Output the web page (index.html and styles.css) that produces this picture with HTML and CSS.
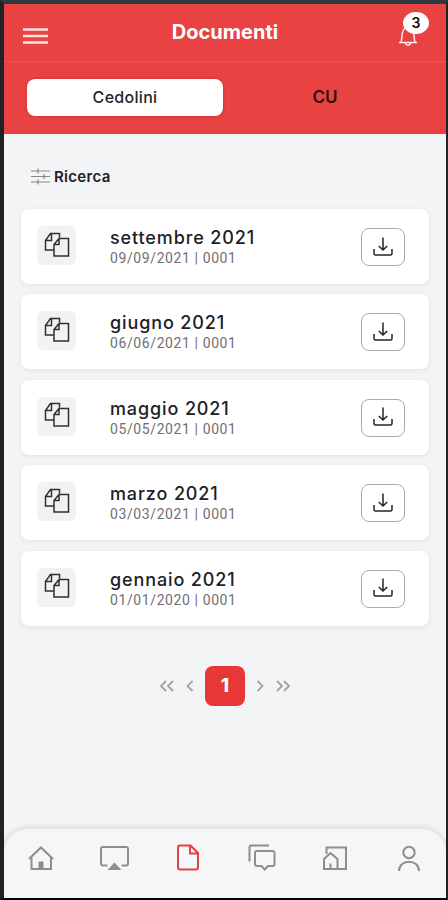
FILE: index.html
```html
<!DOCTYPE html>
<html lang="it">
<head>
<meta charset="utf-8">
<title>Documenti</title>
<link rel="stylesheet" href="styles.css">
</head>
<body>
<svg class="defs" width="0" height="0">
  <symbol id="copy" viewBox="0 0 26 26"><path d="M9.500 19H1.500V9.500L6.500 2.500H15.500V6.500M7.500 2.500V9.500H1.500M10 13.500L15 7.500H24.500V25H10ZM10 13.500H15V7.500"/></symbol>
  <symbol id="download" viewBox="0 0 20 20"><path d="M10 .5V12.500M5.800 9L10 13L14.200 9M1 12V16.500Q1 18 2.500 18H17.500Q19 18 19 16.500V12"/></symbol>
</svg>
<div class="app">
  <header class="top">
    <svg class="menu" viewBox="0 0 26 18"><path d="M0 2.500H25M0 9H25M0 15.500H25"/></svg>
    <h1>Documenti</h1>
    <div class="bell">
      <svg viewBox="0 0 20 24"><path d="M1 19.500H19M3 19C4.500 16 3 8 7 5Q10 3 13 5C17 8 15.500 16 17 19M7 20Q10 24.500 13 20"/></svg>
      <span class="badge">3</span>
    </div>
  </header>
  <nav class="tabs"><span class="tab active">Cedolini</span><span class="tab">CU</span></nav>
  <main>
    <div class="search">
      <svg viewBox="0 0 19 17"><path d="M0 3H19M0 8.500H19M0 14H19M7 .5V5.500M13 6V11M7 11.500V16.500"/></svg>
      <span>Ricerca</span>
    </div>
    <section class="list">
      <article class="card"><span class="doc"><svg><use href="#copy"/></svg></span><div class="info"><h2>settembre 2021</h2><p>09/09/2021 | 0001</p></div><span class="dl"><svg><use href="#download"/></svg></span></article>
      <article class="card"><span class="doc"><svg><use href="#copy"/></svg></span><div class="info"><h2>giugno 2021</h2><p>06/06/2021 | 0001</p></div><span class="dl"><svg><use href="#download"/></svg></span></article>
      <article class="card"><span class="doc"><svg><use href="#copy"/></svg></span><div class="info"><h2>maggio 2021</h2><p>05/05/2021 | 0001</p></div><span class="dl"><svg><use href="#download"/></svg></span></article>
      <article class="card"><span class="doc"><svg><use href="#copy"/></svg></span><div class="info"><h2>marzo 2021</h2><p>03/03/2021 | 0001</p></div><span class="dl"><svg><use href="#download"/></svg></span></article>
      <article class="card"><span class="doc"><svg><use href="#copy"/></svg></span><div class="info"><h2>gennaio 2021</h2><p>01/01/2020 | 0001</p></div><span class="dl"><svg><use href="#download"/></svg></span></article>
    </section>
    <div class="pager">
      <svg class="double" viewBox="0 0 16 12"><path d="M7 1L2 6L7 11M14 1L9 6L14 11"/></svg>
      <svg class="single" viewBox="0 0 8 12"><path d="M6.500 1L1.500 6L6.500 11"/></svg>
      <span class="page">1</span>
      <svg class="single" viewBox="0 0 8 12"><path d="M1.500 1L6.500 6L1.500 11"/></svg>
      <svg class="double" viewBox="0 0 16 12"><path d="M2 1L7 6L2 11M9 1L14 6L9 11"/></svg>
    </div>
  </main>
  <nav class="bottom">
    <svg viewBox="0 0 32 32"><path d="M4 17L16 5.500L28 17M6.500 15.500V27H26V15.500"/><path class="fill" d="M13.500 19.500H18.500V27H13.500Z"/></svg>
    <svg viewBox="0 0 32 32"><path d="M8.500 23.500H4Q2 23.500 2 21.500V7Q2 5 4 5H27Q29 5 29 7V21.500Q29 23.500 27 23.500H22.500"/><path class="fill" d="M15.500 20.500L22.500 28H8.500Z"/></svg>
    <svg class="current" viewBox="0 0 32 32"><path d="M8 3.500H18.500L26 11V25.500Q26 27.500 24 27.500H8Q6 27.500 6 25.500V5.500Q6 3.500 8 3.500ZM18 3.500V11.500H26"/></svg>
    <svg viewBox="0 0 32 32"><path d="M3.500 19.500V5.500Q3.500 3.500 5.500 3.500H23M11 9H26.500Q28.500 9 28.500 11V22Q28.500 24 26.500 24H22L18.800 27.500L15.500 24H11Q9 24 9 22V11Q9 9 11 9Z"/></svg>
    <svg viewBox="0 0 32 32"><path d="M7.500 12V5.500H27V27H5V17L11.500 11L18.500 17V27M11.500 21.500V27"/></svg>
    <svg viewBox="0 0 32 32"><circle cx="16" cy="10.500" r="5.700"/><path d="M6 29C6 16.500 26 16.500 26 29"/></svg>
  </nav>
</div>
</body>
</html>
```
FILE: styles.css
```css
* { box-sizing: border-box; margin: 0; padding: 0; }
body { height: 900px; overflow: hidden; font-family: Inter, "Open Sans", sans-serif; color: #202124; background: #f2f4f6; }
svg { fill: none; stroke: currentColor; stroke-width: 1.5; flex: none; }
.defs { position: absolute; }
.app { width: 448px; height: 900px; overflow: hidden; display: flex; flex-direction: column; border: solid #202224; border-width: 4px 2px 2px 4px; border-top-color: #2d3b40; border-bottom-color: #000; }
.top { height: 58px; flex: none; background: #e84242; color: #fff; border-bottom: 1px solid #ec5652; display: grid; grid-template-columns: 80px 1fr 80px; }
.menu { width: 26px; height: 18px; margin: 23px 0 0 19px; stroke-width: 2.5; color: #ffe3df; }
h1 { font-size: 20px; line-height: 24px; font-weight: 700; text-align: center; margin: 16px 0 0; white-space: nowrap; }
.bell { position: relative; }
.bell svg { position: absolute; left: 32px; top: 19px; width: 20px; height: 24px; color: #ffe9e6; }
.badge { position: absolute; left: 37px; top: 8px; width: 26px; height: 22px; border-radius: 50%; background: #fff; color: #111; font: 600 14px/22px Inter, sans-serif; text-align: center; }
.tabs { height: 72px; flex: none; background: #e84242; display: grid; grid-template-columns: 196px 204px; padding: 17px 0 0 23px; }
.tab { height: 37px; line-height: 36px; text-align: center; font-size: 17px; font-weight: 600; color: #2a1011; }
.tab.active { background: #fff; border-radius: 8px; color: #252525; font-size: 16px; font-weight: 500; letter-spacing: .3px; box-shadow: 0 0 3px #b92e30; }
main { flex: 1; padding: 32px 17px 0 17px; }
.search { height: 20px; display: flex; align-items: center; padding-left: 10px; gap: 4px; font-size: 15px; font-weight: 600; letter-spacing: .3px; }
.search svg { width: 19px; height: 17px; color: #85888a; stroke-width: 1.2; }
.list { display: grid; gap: 10.400px; margin-top: 23px; }
.card { height: 75px; background: #fff; border-radius: 8px; box-shadow: 0 1px 5px #dfe3e6; display: flex; padding-left: 16px; }
.doc { width: 39px; height: 39px; margin-top: 17px; border-radius: 6px; background: #f2f2f2; display: grid; place-items: center; color: #303030; }
.doc svg { width: 26px; height: 26px; margin-top: -4px; }
.info { margin-left: 34px; padding-top: 17px; width: 251px; }
h2 { font-size: 18px; line-height: 23px; font-weight: 500; letter-spacing: .88px; white-space: nowrap; }
.info p { font: 14px/17px Roboto, sans-serif; color: #707070; letter-spacing: .6px; white-space: nowrap; margin-top: 1px; }
.dl { width: 44px; height: 38px; flex: none; margin-top: 19px; border: 1.5px solid #aaa; border-radius: 8px; display: grid; place-items: center; color: #252525; }
.dl svg { width: 20px; height: 20px; margin-top: -1px; }
.pager { display: flex; height: 40px; margin-top: 40px; align-items: center; justify-content: center; color: #a0a2a4; }
.double { width: 16px; height: 12px; stroke-width: 1.8; }
.single { width: 8px; height: 12px; margin: 0 11px; stroke-width: 1.8; }
.page { width: 40px; height: 40px; border-radius: 8px; background: #e73737; color: #fff; font-size: 19px; line-height: 40px; font-weight: 800; text-align: center; }
.bottom { height: 69px; flex: none; display: grid; grid-template-columns: repeat(6, 32px); column-gap: 41.600px; padding: 13px 0 0 21px; border-radius: 24px 24px 0 0; background: #f4f6f8; box-shadow: 0 -1px 4px 2px #dfe1e3; color: #8c8e90; }
.bottom svg { width: 32px; height: 32px; stroke-width: 2; }
.bottom .fill { fill: currentColor; stroke: none; }
.bottom .current { color: #e24145; }
```
